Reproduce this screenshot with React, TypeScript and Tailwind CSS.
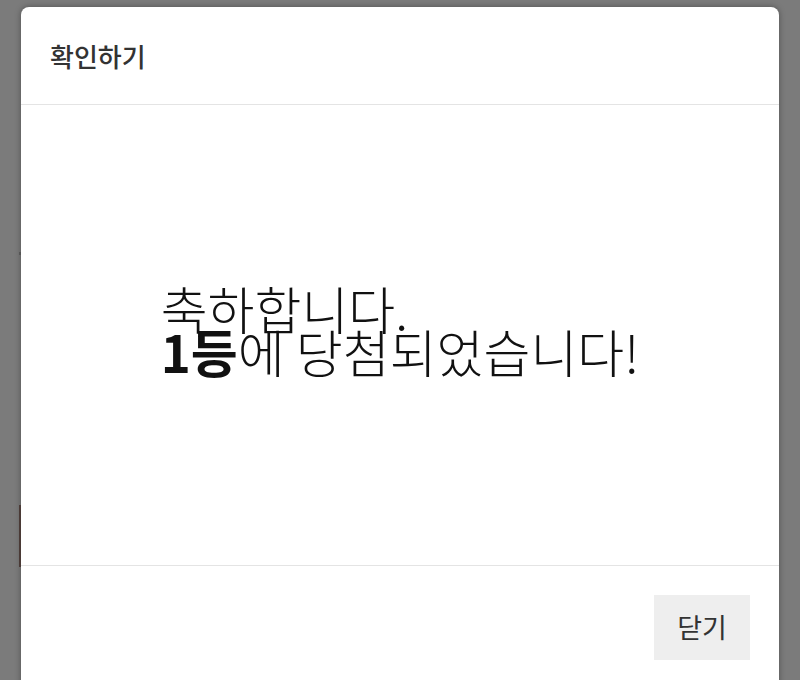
export default function App() {
  return (
    <div
      className="relative h-[680px] w-[800px] overflow-hidden bg-[#7b7b7b]"
      style={{ fontFamily: '"Noto Sans CJK KR", "Noto Sans", sans-serif' }}
    >
      {/* backdrop remnants peeking past the modal edge */}
      <div className="absolute left-[19px] top-[505px] h-[62px] w-[2px] bg-[#4a3a36]" />
      <div className="absolute left-[19px] top-[252px] h-[3px] w-[2px] bg-[#555]" />

      <div className="mx-[21px] mt-[7px] h-[720px] rounded-t-lg bg-white shadow-[0_0_6px_rgba(0,0,0,0.35)]">
        <div className="flex h-[98px] items-center border-b border-[#e4e4e4] px-[29px]">
          <h2 className="text-[26px] font-medium text-[#333]">확인하기</h2>
        </div>

        <div className="flex h-[461px] items-center justify-center border-b border-[#e4e4e4] pb-[10px]">
          <div className="text-left text-[51px] font-light leading-[43px] text-[#111]">
            <p>축하합니다.</p>
            <p>
              <b className="font-semibold">1등</b>에 당첨되었습니다!
            </p>
          </div>
        </div>

        <div className="flex justify-end px-[29px] pt-[29px]">
          <button className="h-[65px] w-[96px] bg-[#eeeeee] text-[27px] text-[#333]">닫기</button>
        </div>
      </div>
    </div>
  );
}
